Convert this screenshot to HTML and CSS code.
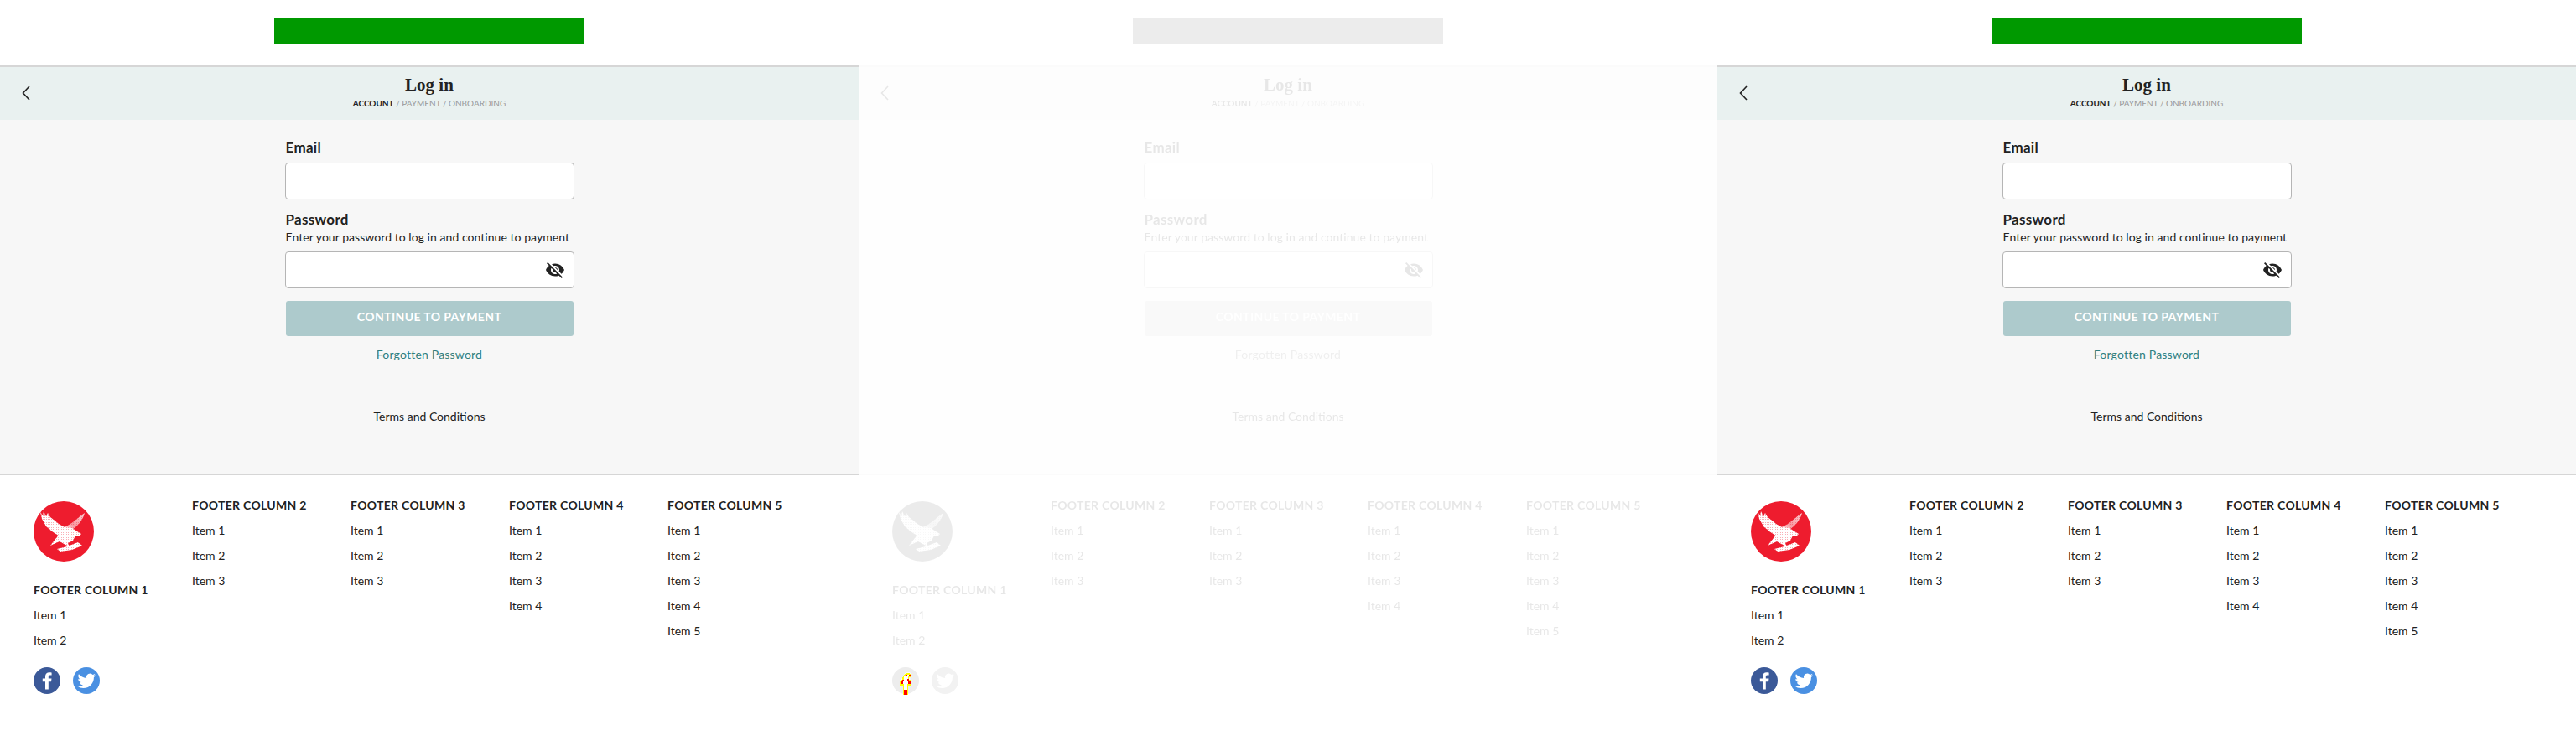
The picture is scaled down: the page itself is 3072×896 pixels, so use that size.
FILE: index.html
```html
<!DOCTYPE html>
<html lang="en">
<head>
    <meta charset="UTF-8">
    <title>Log in</title>
    <link rel="stylesheet" href="styles.css">
</head>
<body>
    <svg class="defs" width="0" height="0">
        <defs>
            <pattern id="dots" width="2" height="2" patternUnits="userSpaceOnUse">
                <rect width="1" height="1" x="1" y="1" fill="#ee1c2e" opacity="0.35"/>
            </pattern>
            <linearGradient id="fade" x1="1" y1="0" x2="0" y2="1">
                <stop offset="0" stop-color="#fff" stop-opacity="0.8"/>
                <stop offset="0.6" stop-color="#fff" stop-opacity="0.55"/>
                <stop offset="1" stop-color="#fff" stop-opacity="0.9"/>
            </linearGradient>
            <symbol id="eagle" viewBox="0 0 72 72">
                <circle cx="36" cy="36" r="36" fill="#ee1c2e"/>
                <path fill="url(#fade)" d="M61 14C59 22 53 30 44 35L36 31C45 28 52 20 61 14Z"/>
                <path fill="#fff" d="M8 13L11 17L12 12L15 18L17 14L20 19L24 22L30 27L37 31L42 34L37 46L28 40L22 36L15 30L10 21Z"/>
                <path fill="#fff" d="M37 31L46 32L52 36L57 39L54 42L50 41L47 47L41 50L43 54L38 52L31 48L20 53L27 44Z"/>
                <path fill="#fff" d="M28 57L40 54L53 49L58 53L46 58L32 60Z"/>
                <rect x="8" y="12" width="50" height="48" fill="url(#dots)"/>
            </symbol>
            <symbol id="fb" viewBox="0 0 32 32">
                <circle cx="16" cy="16" r="16" fill="#3b5998"/>
                <path fill="#fff" d="M17.800 26.500v-9.300h3.200l.5-3.700h-3.700v-2.300c0-1.100.3-1.800 1.800-1.800h2V6.400c-.4 0-1.500-.2-2.900-.2-2.800 0-4.700 1.700-4.700 4.900v2.400h-3.200v3.700H14v9.300z"/>
            </symbol>
            <symbol id="tw" viewBox="0 0 32 32">
                <circle cx="16" cy="16" r="16" fill="#4a90e2"/>
                <path fill="#fff" transform="translate(5.500 5.500) scale(.9)" d="M23.950 4.570a10 10 0 01-2.820.77 4.960 4.960 0 002.160-2.720c-.95.55-2 .95-3.130 1.190a4.920 4.920 0 00-8.380 4.480C7.690 8.090 4.070 6.130 1.640 3.160a4.820 4.820 0 00-.67 2.480c0 1.710.87 3.210 2.190 4.100a4.900 4.900 0 01-2.230-.62v.06a4.920 4.920 0 003.950 4.830 5 5 0 01-2.210.08 4.940 4.940 0 004.600 3.420A9.870 9.870 0 010 19.540a14 14 0 007.560 2.210c9.050 0 14-7.500 14-13.980 0-.21 0-.42-.02-.63a9.940 9.940 0 002.460-2.550z"/>
            </symbol>
            <symbol id="eye-off" viewBox="0 0 24 24">
                <path fill="#222" d="M12 7c2.760 0 5 2.240 5 5 0 .65-.13 1.260-.36 1.830l2.920 2.920c1.510-1.260 2.700-2.890 3.430-4.750-1.730-4.390-6-7.500-11-7.500-1.400 0-2.740.25-3.980.7l2.160 2.160C10.740 7.130 11.350 7 12 7zM2 4.270l2.280 2.280.46.46C3.080 8.300 1.780 10.020 1 12c1.730 4.390 6 7.500 11 7.500 1.550 0 3.030-.3 4.380-.84l.42.42L19.730 22 21 20.730 3.270 3 2 4.270zM7.530 9.800l1.550 1.550c-.05.21-.08.43-.08.65 0 1.660 1.340 3 3 3 .22 0 .44-.03.65-.08l1.550 1.550c-.67.33-1.410.53-2.200.53-2.760 0-5-2.240-5-5 0-.79.2-1.530.53-2.200zm4.310-.78l3.150 3.150.02-.16c0-1.660-1.340-3-3-3l-.17.01z"/>
            </symbol>
        </defs>
    </svg>

    <div class="panels">
        <section class="panel">
            <div class="top"><div class="ad"></div></div>
            <header class="title-bar">
                <svg class="back" width="12" height="18" viewBox="0 0 12 18"><path d="M10 1L2.500 9L10 17" fill="none" stroke="#222" stroke-width="1.600"/></svg>
                <h1>Log in</h1>
                <p class="steps"><b>ACCOUNT</b> / PAYMENT / ONBOARDING</p>
            </header>
            <main class="content">
                <form class="login">
                    <label class="label">Email</label>
                    <div class="field"></div>
                    <label class="label label-pass">Password</label>
                    <p class="hint">Enter your password to log in and continue to payment</p>
                    <div class="field"><svg class="eye"><use href="#eye-off"/></svg></div>
                    <div class="btn">CONTINUE TO PAYMENT</div>
                    <a class="forgot" href="#">Forgotten Password</a>
                    <a class="terms" href="#">Terms and Conditions</a>
                </form>
            </main>
            <footer class="footer">
                <div class="col">
                    <svg class="logo"><use href="#eagle"/></svg>
                    <h4>FOOTER COLUMN 1</h4>
                    <a>Item 1</a><a>Item 2</a>
                    <div class="social"><svg><use href="#fb"/></svg><svg><use href="#tw"/></svg></div>
                </div>
                <div class="col"><h4>FOOTER COLUMN 2</h4><a>Item 1</a><a>Item 2</a><a>Item 3</a></div>
                <div class="col"><h4>FOOTER COLUMN 3</h4><a>Item 1</a><a>Item 2</a><a>Item 3</a></div>
                <div class="col"><h4>FOOTER COLUMN 4</h4><a>Item 1</a><a>Item 2</a><a>Item 3</a><a>Item 4</a></div>
                <div class="col"><h4>FOOTER COLUMN 5</h4><a>Item 1</a><a>Item 2</a><a>Item 3</a><a>Item 4</a><a>Item 5</a></div>
            </footer>
        </section>

        <section class="panel">
            <div class="faded">
                <div class="top"><div class="ad"></div></div>
                <header class="title-bar">
                    <svg class="back" width="12" height="18" viewBox="0 0 12 18"><path d="M10 1L2.500 9L10 17" fill="none" stroke="#222" stroke-width="1.600"/></svg>
                    <h1>Log in</h1>
                    <p class="steps"><b>ACCOUNT</b> / PAYMENT / ONBOARDING</p>
                </header>
                <main class="content">
                    <form class="login">
                        <label class="label">Email</label>
                        <div class="field"></div>
                        <label class="label label-pass">Password</label>
                        <p class="hint">Enter your password to log in and continue to payment</p>
                        <div class="field"><svg class="eye"><use href="#eye-off"/></svg></div>
                        <div class="btn">CONTINUE TO PAYMENT</div>
                        <a class="forgot" href="#">Forgotten Password</a>
                        <a class="terms" href="#">Terms and Conditions</a>
                    </form>
                </main>
                <footer class="footer">
                    <div class="col">
                        <svg class="logo"><use href="#eagle"/></svg>
                        <h4>FOOTER COLUMN 1</h4>
                        <a>Item 1</a><a>Item 2</a>
                        <div class="social"><svg><use href="#fb"/></svg><svg><use href="#tw"/></svg></div>
                    </div>
                    <div class="col"><h4>FOOTER COLUMN 2</h4><a>Item 1</a><a>Item 2</a><a>Item 3</a></div>
                    <div class="col"><h4>FOOTER COLUMN 3</h4><a>Item 1</a><a>Item 2</a><a>Item 3</a></div>
                    <div class="col"><h4>FOOTER COLUMN 4</h4><a>Item 1</a><a>Item 2</a><a>Item 3</a><a>Item 4</a></div>
                    <div class="col"><h4>FOOTER COLUMN 5</h4><a>Item 1</a><a>Item 2</a><a>Item 3</a><a>Item 4</a><a>Item 5</a></div>
                </footer>
            </div>
            <!-- glitched f that sits on top of the faded panel -->
            <svg class="glitch" width="14" height="26" viewBox="0 0 14 26" shape-rendering="crispEdges">
                <path fill="#ff0" d="M7 0h5v1h2v4h-3v2h-1v1h3v1h1v6h-4v11H4V15H0V9h1V8h2V5h1V3h1V2h1V1h1z"/>
                <path fill="#fff" d="M7 2h5v2h-2v5h3v4H9v7H5v-7H2V10h3V4h1V3h1z"/>
                <path fill="#f00" d="M11 2h2v2h-2zM1 10h3v3H1zM10 10h3v3h-3zM3 8h2v1H3zM9 7h2v2H9zM8 2h1v1H8zM5 20h4v6H5z"/>
            </svg>
        </section>

        <section class="panel">
            <div class="top"><div class="ad"></div></div>
            <header class="title-bar">
                <svg class="back" width="12" height="18" viewBox="0 0 12 18"><path d="M10 1L2.500 9L10 17" fill="none" stroke="#222" stroke-width="1.600"/></svg>
                <h1>Log in</h1>
                <p class="steps"><b>ACCOUNT</b> / PAYMENT / ONBOARDING</p>
            </header>
            <main class="content">
                <form class="login">
                    <label class="label">Email</label>
                    <div class="field"></div>
                    <label class="label label-pass">Password</label>
                    <p class="hint">Enter your password to log in and continue to payment</p>
                    <div class="field"><svg class="eye"><use href="#eye-off"/></svg></div>
                    <div class="btn">CONTINUE TO PAYMENT</div>
                    <a class="forgot" href="#">Forgotten Password</a>
                    <a class="terms" href="#">Terms and Conditions</a>
                </form>
            </main>
            <footer class="footer">
                <div class="col">
                    <svg class="logo"><use href="#eagle"/></svg>
                    <h4>FOOTER COLUMN 1</h4>
                    <a>Item 1</a><a>Item 2</a>
                    <div class="social"><svg><use href="#fb"/></svg><svg><use href="#tw"/></svg></div>
                </div>
                <div class="col"><h4>FOOTER COLUMN 2</h4><a>Item 1</a><a>Item 2</a><a>Item 3</a></div>
                <div class="col"><h4>FOOTER COLUMN 3</h4><a>Item 1</a><a>Item 2</a><a>Item 3</a></div>
                <div class="col"><h4>FOOTER COLUMN 4</h4><a>Item 1</a><a>Item 2</a><a>Item 3</a><a>Item 4</a></div>
                <div class="col"><h4>FOOTER COLUMN 5</h4><a>Item 1</a><a>Item 2</a><a>Item 3</a><a>Item 4</a><a>Item 5</a></div>
            </footer>
        </section>
    </div>
</body>
</html>
```

FILE: styles.css
```css
* {
    box-sizing: border-box;
}
body {
    margin: 0;
    height: 896px;
    overflow: hidden;
    background: #fff;
    color: #222;
    font-family: Lato, "Open Sans", sans-serif;
}
.defs {
    display: block;
    height: 0;
}
.panels {
    display: flex;
}
.panel {
    position: relative;
    width: 1024px;
    height: 896px;
    flex: none;
}
.faded {
    height: 896px;
    filter: grayscale(1) opacity(0.11);
}
.faded .ad {
    background: #525252;
}
.glitch {
    position: absolute;
    left: 49px;
    top: 803px;
}

.top {
    height: 78px;
    padding-top: 22px;
}
.ad {
    width: 370px;
    height: 31px;
    margin: 0 auto;
    background: #009900;
}

.title-bar {
    position: relative;
    height: 65px;
    padding-top: 8px;
    border-top: 2px solid #d6d6d6;
    background: #e9f1f0;
    text-align: center;
}
.back {
    position: absolute;
    left: 25px;
    top: 22px;
}
.title-bar h1 {
    margin: 0;
    font-family: "Liberation Serif", serif;
    font-size: 21px;
    line-height: 26px;
    font-weight: bold;
}
.steps {
    margin: 2px 0 0;
    font-size: 10px;
    line-height: 14px;
    color: #999;
}
.steps b {
    color: #222;
}

.content {
    height: 422px;
    padding-top: 22px;
    background: #f7f7f7;
}
.login {
    display: flex;
    flex-direction: column;
    width: 345px;
    margin: 0 auto;
}
.label {
    padding-left: 1px;
    font-size: 17px;
    line-height: 22px;
    font-weight: bold;
    letter-spacing: 0.3px;
}
.label-pass {
    margin-top: 13px;
}
.hint {
    margin: 0 0 7px;
    padding-left: 1px;
    font-size: 14px;
    line-height: 20px;
    letter-spacing: 0.05px;
    white-space: nowrap;
}
.field {
    display: flex;
    align-items: center;
    justify-content: flex-end;
    height: 44px;
    margin-top: 7px;
    padding-right: 10px;
    background: #fff;
    border: 1px solid #b5b5b5;
    border-radius: 4px;
}
.hint + .field {
    margin-top: 0;
}
.eye {
    width: 24px;
    height: 24px;
}
.btn {
    height: 42px;
    margin: 15px 1px 0;
    background: #adcacc;
    border-radius: 3px;
    color: #fff;
    font-size: 14px;
    font-weight: bold;
    line-height: 38px;
    letter-spacing: 0.4px;
    text-align: center;
}
.forgot,
.terms {
    align-self: center;
    font-size: 14px;
    line-height: 20px;
    text-decoration: underline;
}
.forgot {
    margin-top: 12px;
    color: #2f7f80;
    letter-spacing: 0.2px;
}
.terms {
    margin-top: 54px;
    color: #222;
}

.footer {
    display: grid;
    grid-template-columns: repeat(5, 189px);
    height: 331px;
    padding: 26px 0 0 40px;
    border-top: 2px solid #d6d6d6;
}
.col {
    display: flex;
    flex-direction: column;
    align-items: flex-start;
}
.col h4 {
    margin: 0;
    font-size: 14px;
    line-height: 20px;
    letter-spacing: 0.3px;
    font-weight: bold;
    white-space: nowrap;
}
.col a {
    margin-top: 10px;
    font-size: 14px;
    line-height: 20px;
}
.logo {
    width: 72px;
    height: 72px;
    margin: 5px 0 24px;
}
.social {
    display: flex;
    gap: 15px;
    margin-top: 22px;
}
.social svg {
    width: 32px;
    height: 32px;
}
```
